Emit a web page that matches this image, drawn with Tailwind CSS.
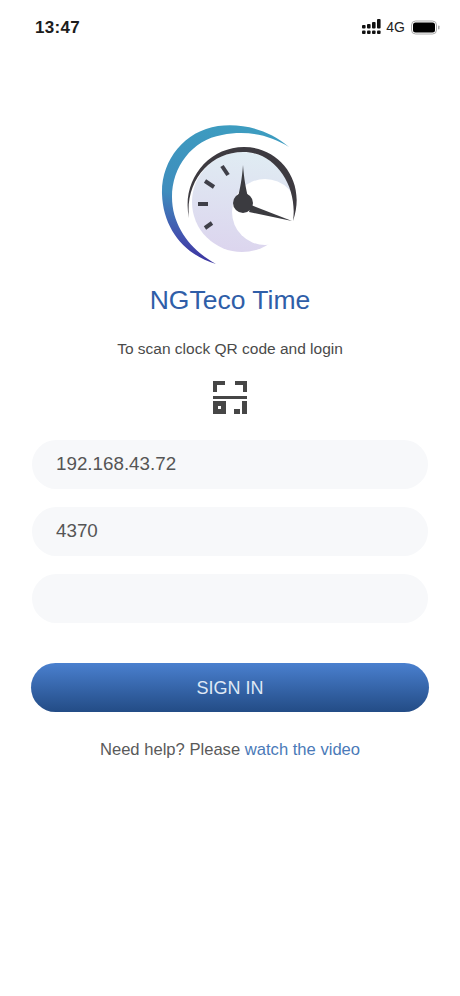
<!DOCTYPE html>
<html lang="en">
<head>
  <meta charset="UTF-8" />
  <meta name="viewport" content="width=device-width, initial-scale=1.0" />
  <title>NGTeco Time - Sign in</title>
  <script src="https://cdn.jsdelivr.net/npm/@tailwindcss/browser@4"></script>
</head>
<body class="bg-white w-[460px] h-[996px] overflow-hidden font-['Liberation_Sans',Arial,sans-serif]">
  <!-- Status bar -->
  <div class="h-[54px] pl-[35px] pr-[18px] flex items-center justify-between">
    <span class="pt-[1px] text-[17px] font-bold text-[#1c1c1c] tracking-[0.3px]">13:47</span>
    <div class="flex items-center gap-[5px] pr-[1px]">
      <svg width="19" height="16" viewBox="0 0 19 16" fill="#111">
        <rect x="0" y="6" width="3.6" height="3.6" rx="1" />
        <rect x="0" y="11.5" width="3.6" height="3.6" rx="1" />
        <rect x="5" y="5" width="3.6" height="4.6" rx="1" />
        <rect x="5" y="11.5" width="3.6" height="3.6" rx="1" />
        <rect x="10" y="3" width="3.6" height="6.6" rx="1" />
        <rect x="10" y="11.5" width="3.6" height="3.6" rx="1" />
        <rect x="15" y="0" width="3.6" height="9.6" rx="1" />
        <rect x="15" y="11.5" width="3.6" height="3.6" rx="1" />
      </svg>
      <span class="text-[14px] text-[#222]">4G</span>
      <svg width="30" height="15" viewBox="0 0 30 15" class="ml-[1px]">
        <rect x="0.5" y="1" width="25" height="13" rx="4" fill="none" stroke="#aaa" />
        <rect x="2" y="2.5" width="22" height="10" rx="2.5" fill="#000" />
        <rect x="27" y="5.5" width="1.5" height="4" rx="0.75" fill="#aaa" />
      </svg>
    </div>
  </div>

  <!-- Logo -->
  <div class="flex justify-center mt-[61px]">
    <svg width="160" height="160" viewBox="0 0 160 160">
      <defs>
        <linearGradient id="swoosh" x1="0.5" y1="0" x2="0.3" y2="1">
          <stop offset="0" stop-color="#3d9cc0" />
          <stop offset="0.55" stop-color="#3f8dbd" />
          <stop offset="0.85" stop-color="#4350ae" />
          <stop offset="1" stop-color="#3a2f9e" />
        </linearGradient>
        <linearGradient id="face" x1="0.5" y1="0" x2="0.4" y2="1">
          <stop offset="0" stop-color="#e0ecf3" />
          <stop offset="1" stop-color="#dcd5ee" />
        </linearGradient>
      </defs>
      <path d="M139 32 C118 14 92 8 68 11 C34 16 11 46 12 79 C13 114 35 140 66 149 C42 136 22 112 22 82 C22 52 42 25 72 20 C97 15 120 20 139 32 Z" fill="url(#swoosh)" />
      <circle cx="92" cy="87" r="50" fill="url(#face)" />
      <circle cx="115" cy="97" r="33" fill="#fff" />
      <path d="M39 103 C31 66 58 32 94 32 C129 32 157 66 143 106 C148 72 126 37 93 37 C60 37 35 66 39 103 Z" fill="#3d3a40" />
      <g stroke="#3f3f48" stroke-width="4">
        <path d="M72 51 L78 60" />
        <path d="M55 66 L64 72" />
        <path d="M48 89 L58 89" />
        <path d="M55 113 L62 108" />
      </g>
      <path d="M93 50 C94 64 96 74 98 82 L88 82 C90 74 92 64 93 50 Z" fill="#3b3b40" />
      <path d="M142 106 L101 90 L99 97 Z" fill="#3b3b40" />
      <circle cx="93" cy="88" r="10" fill="#3b3b40" />
    </svg>
  </div>

  <h1 class="mt-[8px] text-center text-[26.5px] leading-[34px] text-[#2f5ea8]">NGTeco Time</h1>
  <p class="mt-[22px] text-center text-[15.5px] leading-[20px] text-[#4a4a4a]">To scan clock QR code and login</p>

  <!-- QR scan icon -->
  <div class="flex justify-center mt-[21px]">
    <svg width="36" height="35" viewBox="0 0 36 35" fill="#464646">
      <path d="M1 1 H13 V5 H5 V12 H1 Z" />
      <path d="M23 1 H35 V12 H31 V5 H23 Z" />
      <rect x="1" y="16" width="34" height="3" />
      <path fill-rule="evenodd" d="M1 21 H14 V34 H1 Z M6 26 V29 H9 V26 Z" />
      <rect x="22" y="29" width="6" height="5" />
      <rect x="30" y="21" width="5" height="13" />
    </svg>
  </div>

  <!-- Form -->
  <form class="mt-[25px] px-[32px] flex flex-col gap-[18px]">
    <input class="h-[49px] w-full rounded-full bg-[#f7f8fa] pl-[24px] pb-[2px] text-[18.8px] text-[#555] outline-none" type="text" value="192.168.43.72" />
    <input class="h-[49px] w-full rounded-full bg-[#f7f8fa] pl-[24px] pb-[2px] text-[18.8px] text-[#555] outline-none" type="text" value="4370" />
    <input class="h-[49px] w-full rounded-full bg-[#f7f8fa] pl-[24px] pb-[2px] text-[18.8px] text-[#555] outline-none" type="password" />
  </form>

  <div class="mt-[40px] px-[31px]">
    <button class="w-full h-[49px] pt-[2px] rounded-full bg-gradient-to-b from-[#4a80cf] to-[#234c86] text-[18px] text-[#dfe8f5]">SIGN IN</button>
  </div>

  <p class="mt-[28px] text-center text-[16.6px] leading-[20px] text-[#5a5a5a]">Need help? Please <a class="text-[#4a7ab8]" href="#">watch the video</a></p>
</body>
</html>
